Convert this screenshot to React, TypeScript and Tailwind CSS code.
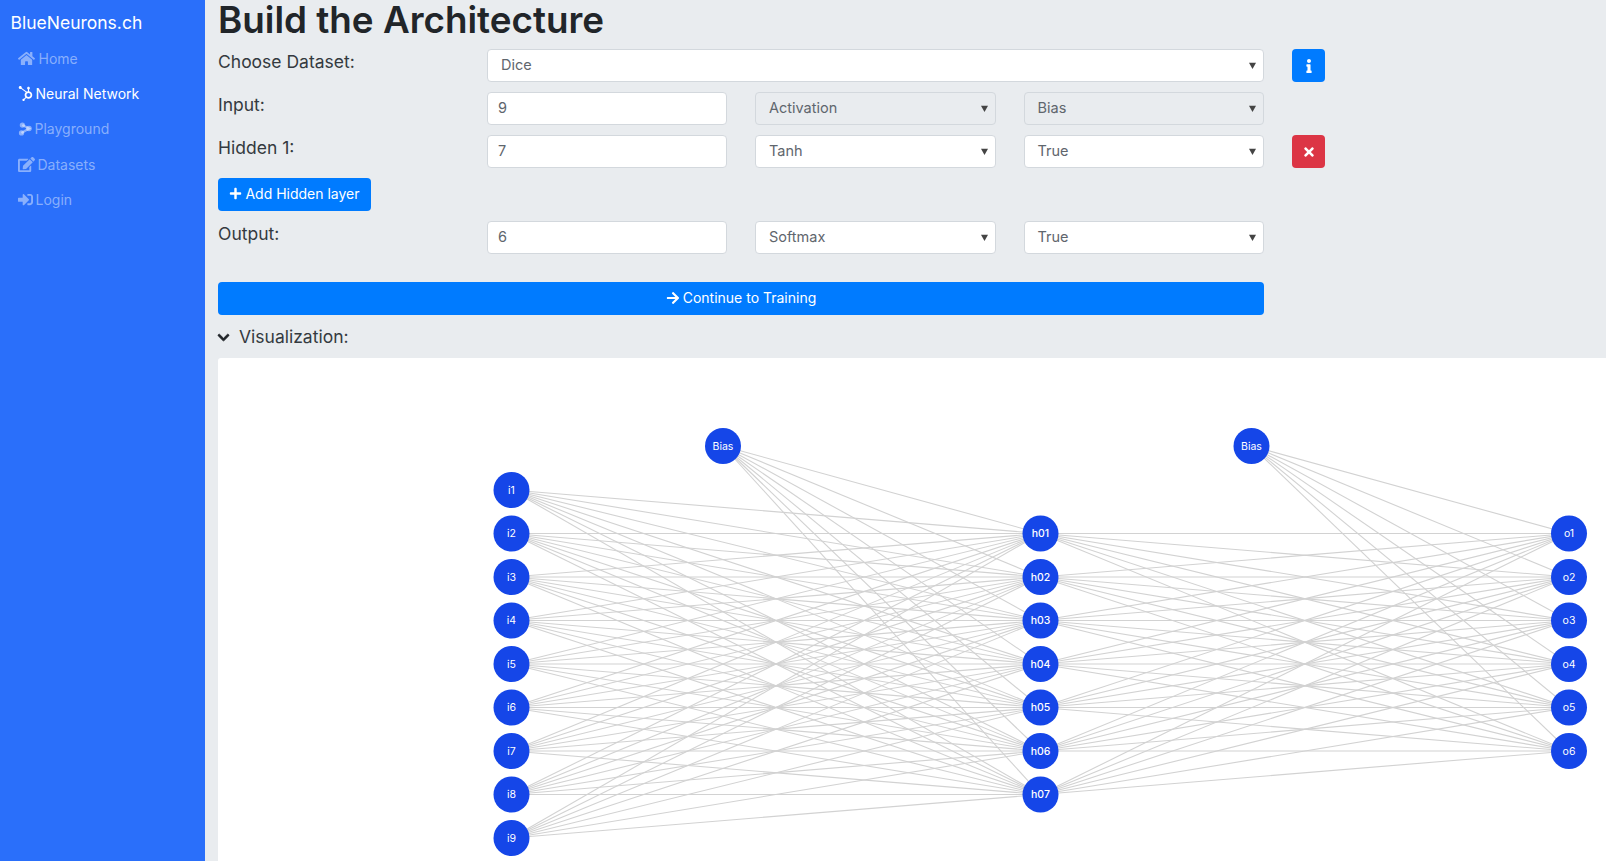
import { FaArrowRight, FaChevronDown, FaEdit, FaHome, FaHubspot, FaInfo, FaPlus, FaSignInAlt, FaTimes } from "react-icons/fa";

const font = "font-['Inter','Roboto',sans-serif]";

function PlaygroundIcon() {
  return (
    <svg viewBox="0 0 16 16" className="w-[14px] h-[14px] fill-current stroke-current">
      <path d="M5 3.5 12.5 7.5 4 12.5" fill="none" strokeWidth="2.6" />
      <circle cx="5" cy="3.5" r="3" stroke="none" />
      <circle cx="12.5" cy="7.5" r="3.2" stroke="none" />
      <circle cx="4" cy="12.5" r="3" stroke="none" />
    </svg>
  );
}

const navItems = [
  { label: "Home", icon: <FaHome className="w-[17px] h-[17px]" />, gap: "gap-[4px]", active: false },
  { label: "Neural Network", icon: <FaHubspot className="w-[15px] h-[15px]" />, gap: "gap-[3px]", active: true },
  { label: "Playground", icon: <PlaygroundIcon />, gap: "gap-[3px]", active: false },
  { label: "Datasets", icon: <FaEdit className="w-[17px] h-[17px]" />, gap: "gap-[3px]", active: false },
  { label: "Login", icon: <FaSignInAlt className="w-[15px] h-[15px]" />, gap: "gap-[3px]", active: false },
];

function Sidebar() {
  return (
    <aside className="w-[205px] shrink-0 bg-[#2a6ffa] text-white">
      <div className="pl-[10.5px] pt-[11px] h-[41px] text-[17.5px] leading-[24px]">BlueNeurons.ch</div>
      <nav className="pl-[17.5px]">
        {navItems.map((item) => (
          <div
            key={item.label}
            className={`flex items-center h-[35.2px] text-[14px] ${item.gap} ${item.active ? "text-white" : "text-white/45"}`}
          >
            {item.icon}
            <span>{item.label}</span>
          </div>
        ))}
      </nav>
    </aside>
  );
}

function Select({ value, muted, wide }: { value: string; muted?: boolean; wide?: boolean }) {
  return (
    <div
      className={`relative h-[33px] ${wide ? "w-[777px]" : "w-[240.5px]"} border border-[#d3d8dd] rounded-[4px] flex items-center pl-[13px] pb-[2px] text-[14.5px] text-[#5f666d] ${muted ? "bg-[#e9ecef]" : "bg-white"}`}
    >
      {value}
      <svg viewBox="0 0 10 10" className="absolute right-[7px] top-[12px] w-[7px] h-[7px] fill-[#444]">
        <path d="M0 1h10L5 10z" />
      </svg>
    </div>
  );
}

function TextInput({ value }: { value: string }) {
  return (
    <div className="h-[33px] w-[240px] bg-white border border-[#d3d8dd] rounded-[4px] flex items-center pl-[10px] pb-[2px] text-[14.5px] text-[#5f666d]">
      {value}
    </div>
  );
}

function Row({ label, children }: { label: string; children: React.ReactNode }) {
  return (
    <div className="flex gap-[28px] items-start">
      <div className="w-[241px] pt-[1px] text-[17.5px] leading-[24px] text-[#343a40]">{label}</div>
      {children}
    </div>
  );
}

function SquareButton({ color, children }: { color: string; children: React.ReactNode }) {
  return <div className={`w-[33px] h-[33px] rounded-[4px] flex items-center justify-center text-white ${color}`}>{children}</div>;
}

const R = 18;
const rowH = 43.5;
const inputs = Array.from({ length: 9 }, (_, i) => ({ x: 293.5, y: 132 + i * rowH, label: `i${i + 1}` }));
const hidden = Array.from({ length: 7 }, (_, i) => ({ x: 822.5, y: 175.5 + i * rowH, label: `h0${i + 1}` }));
const outputs = Array.from({ length: 6 }, (_, i) => ({ x: 1351, y: 175.5 + i * rowH, label: `o${i + 1}` }));
const bias1 = { x: 505, y: 88, label: "Bias" };
const bias2 = { x: 1033.5, y: 88, label: "Bias" };

const links = [
  ...[...inputs, bias1].flatMap((a) => hidden.map((b) => [a, b] as const)),
  ...[...hidden, bias2].flatMap((a) => outputs.map((b) => [a, b] as const)),
];
const nodes = [...inputs, ...hidden, ...outputs, bias1, bias2];

function Graph() {
  return (
    <svg width="1388" height="503" className="block">
      {links.map(([a, b], i) => (
        <line key={i} x1={a.x} y1={a.y} x2={b.x} y2={b.y} stroke="#d2d2d2" strokeWidth="1.1" />
      ))}
      {nodes.map((n) => (
        <g key={n.label + n.x}>
          <circle cx={n.x} cy={n.y} r={R} fill="#1546e8" />
          <text
            x={n.x}
            y={n.y + 3.5}
            textAnchor="middle"
            fontSize="10.5"
            fontWeight={n.label.startsWith("h") ? 500 : 400}
            fill="white"
            fontFamily="Inter, sans-serif"
          >
            {n.label}
          </text>
        </g>
      ))}
    </svg>
  );
}

export default function App() {
  return (
    <div className={`flex h-screen overflow-hidden bg-[#e9ecef] ${font}`}>
      <Sidebar />
      <main className="flex-1 min-w-0 pl-[13px]">
        <h1 className="h-[49px] text-[36.8px] leading-[39px] font-semibold text-[#212529]">Build the Architecture</h1>
        <div className="flex flex-col gap-[10px]">
          <Row label="Choose Dataset:">
            <Select value="Dice" wide />
            <SquareButton color="bg-[#007bff]"><FaInfo className="w-[14px] h-[14px]" /></SquareButton>
          </Row>
          <Row label="Input:">
            <TextInput value="9" />
            <Select value="Activation" muted />
            <Select value="Bias" muted />
          </Row>
          <Row label="Hidden 1:">
            <TextInput value="7" />
            <Select value="Tanh" />
            <Select value="True" />
            <SquareButton color="bg-[#dc3545]"><FaTimes className="w-[14px] h-[14px]" /></SquareButton>
          </Row>
          <div className="w-[153px] h-[33px] pb-[2px] rounded-[4px] bg-[#007bff] text-white text-[14px] flex items-center justify-center gap-[3px]">
            <FaPlus className="w-[13px] h-[13px]" />
            Add Hidden layer
          </div>
          <Row label="Output:">
            <TextInput value="6" />
            <Select value="Softmax" />
            <Select value="True" />
          </Row>
        </div>
        <div className="mt-[28px] w-[1046px] h-[33px] pb-[2px] rounded-[4px] bg-[#007bff] text-white text-[14px] flex items-center justify-center gap-[3px]">
          <FaArrowRight className="w-[14px] h-[14px]" />
          Continue to Training
        </div>
        <div className="mt-[5px] mb-[4px] h-[34px] flex items-center gap-[9px] text-[17.5px] text-[#343a40]">
          <FaChevronDown className="-ml-[1px] w-[13px] h-[13px] text-[#212529] stroke-current stroke-[30]" />
          Visualization:
        </div>
        <div className="bg-white overflow-hidden rounded-tl-[3px]">
          <Graph />
        </div>
      </main>
    </div>
  );
}
